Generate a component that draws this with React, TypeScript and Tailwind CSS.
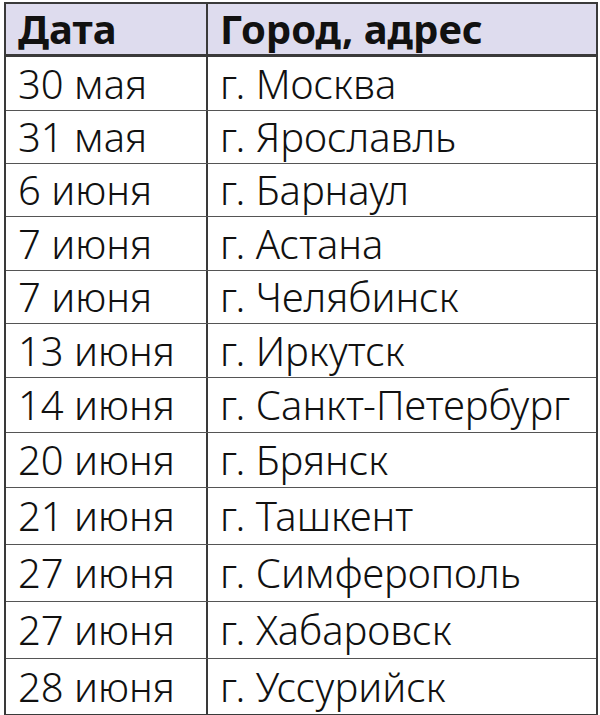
const rows: [string, string, string][] = [
  ["30 мая", "г. Москва", "h-[54px]"],
  ["31 мая", "г. Ярославль", "h-[53px]"],
  ["6 июня", "г. Барнаул", "h-[53px]"],
  ["7 июня", "г. Астана", "h-[54px]"],
  ["7 июня", "г. Челябинск", "h-[53px]"],
  ["13 июня", "г. Иркутск", "h-[54px]"],
  ["14 июня", "г. Санкт-Петербург", "h-[55px]"],
  ["20 июня", "г. Брянск", "h-[55px]"],
  ["21 июня", "г. Ташкент", "h-[57px]"],
  ["27 июня", "г. Симферополь", "h-[57px]"],
  ["27 июня", "г. Хабаровск", "h-[57px]"],
  ["28 июня", "г. Уссурийск", "h-[55px]"],
];

export default function App() {
  return (
    <div className="h-[715px] w-[600px] bg-white pl-[4px] pt-[2px] font-['Noto_Sans',sans-serif] text-[#111]">
      <div className="w-[594px] border-2 border-[#3a3a3a]">
        <div className="flex h-[53px] border-b-[3px] border-[#3a3a3a] bg-[#dedcee] text-[40px] font-bold leading-none">
          <div className="flex w-[202px] items-center border-r-2 border-[#3a3a3a] pl-[12px]">Дата</div>
          <div className="flex flex-1 items-center pl-[12px]">Город, адрес</div>
        </div>
        {rows.map(([date, city, h], i) => (
          <div
            key={i}
            className={`flex ${h} text-[40px] font-[350] leading-none ${i < rows.length - 1 ? "border-b-[1.5px] border-[#555]" : ""}`}
          >
            <div className="flex w-[202px] items-center border-r-2 border-[#3a3a3a] pl-[12px] whitespace-nowrap">{date}</div>
            <div className="flex flex-1 items-center pl-[12px] whitespace-nowrap">{city}</div>
          </div>
        ))}
      </div>
    </div>
  );
}
